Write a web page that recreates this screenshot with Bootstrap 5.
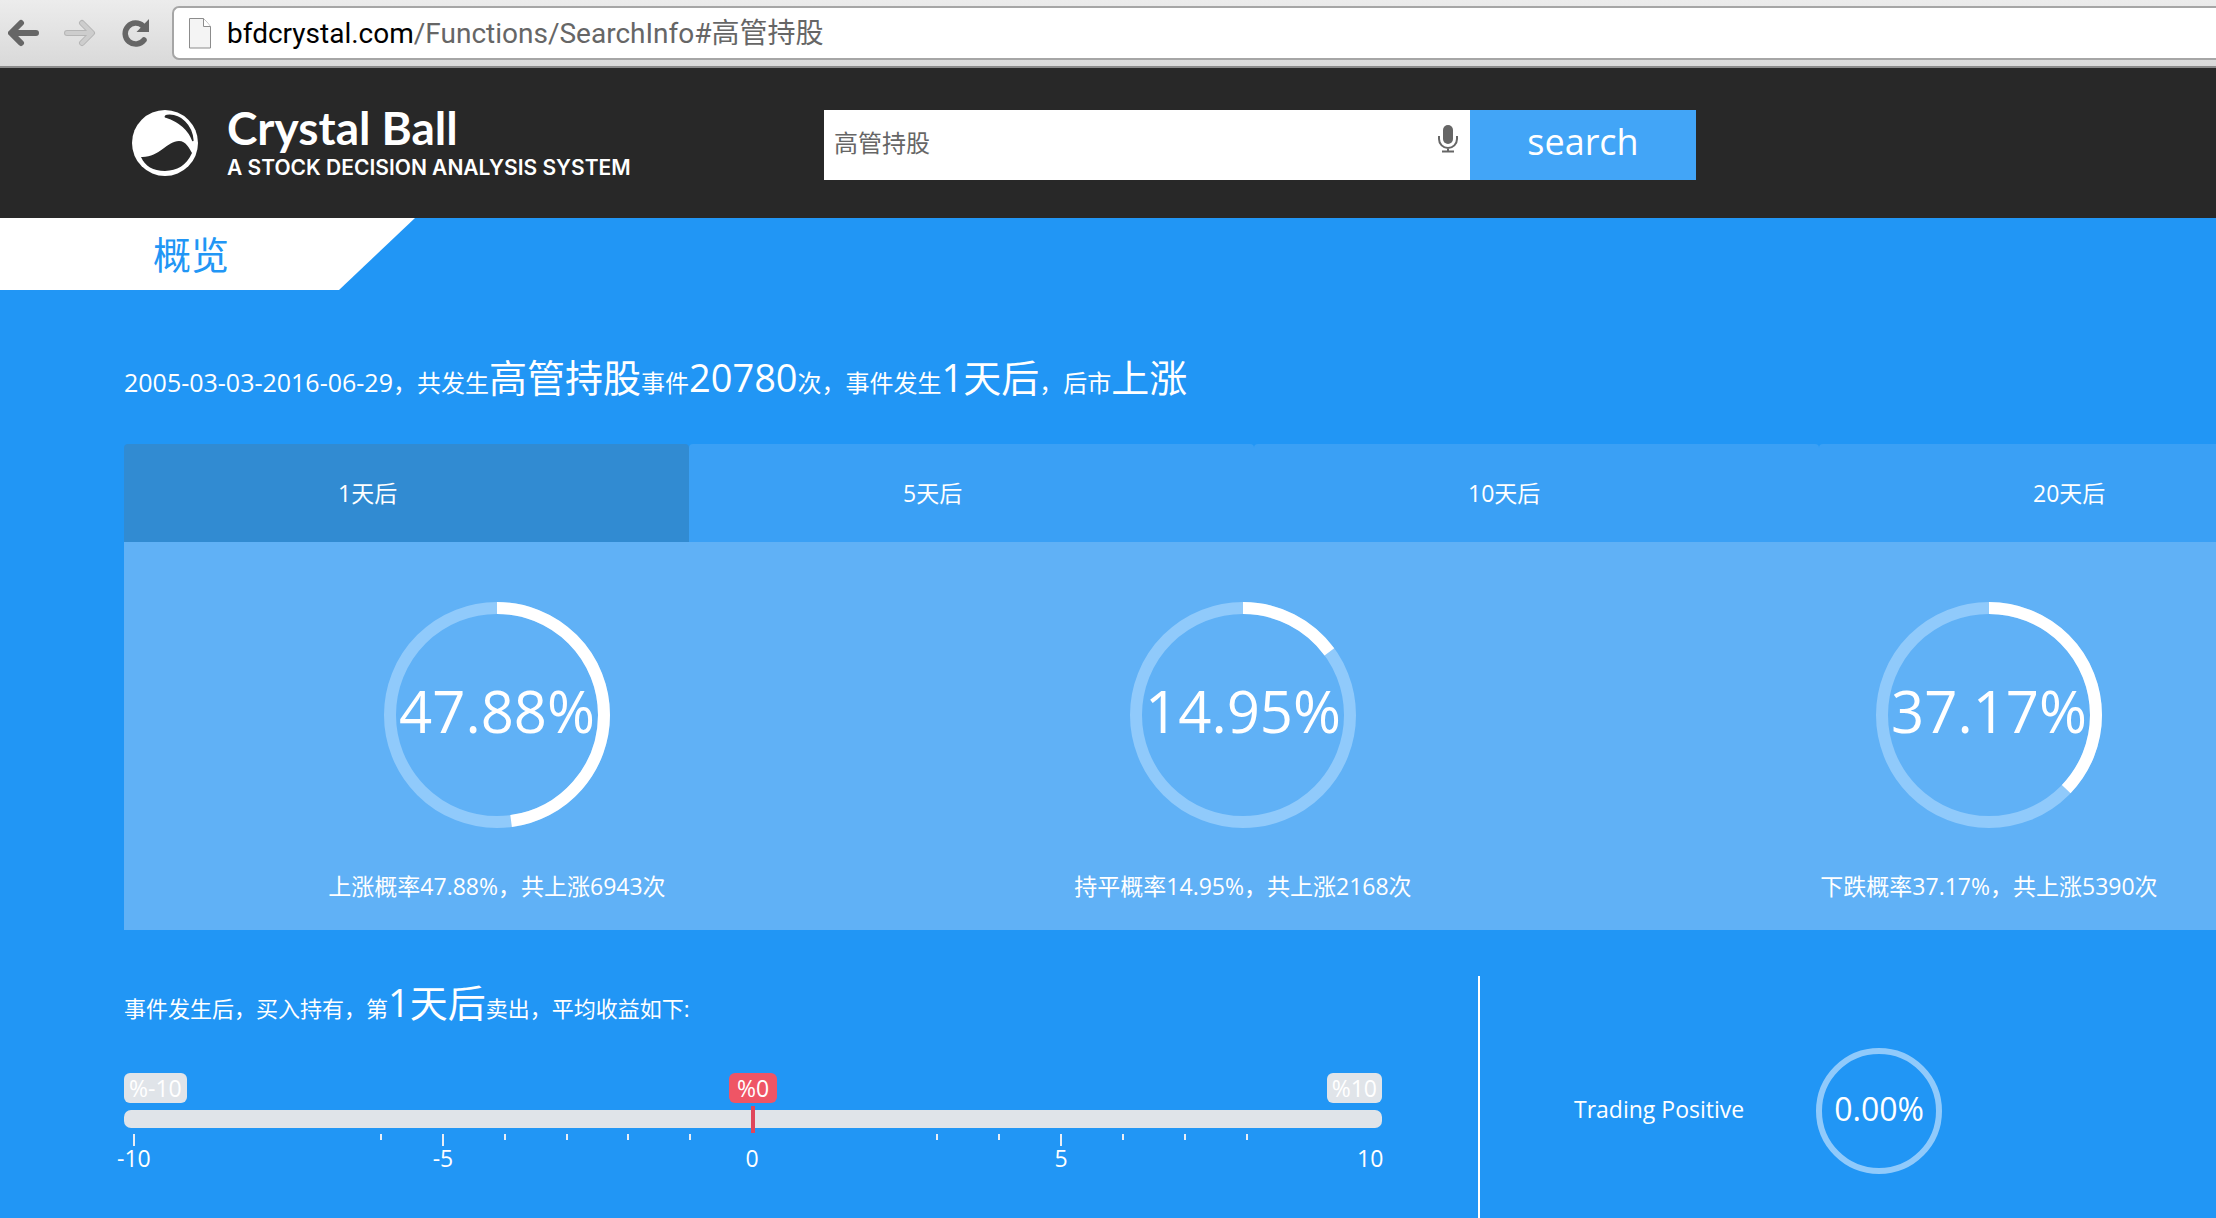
<!DOCTYPE html>
<html lang="zh-CN">
<head>
<meta charset="utf-8">
<meta name="viewport" content="width=device-width, initial-scale=1">
<title>Crystal Ball</title>
<link href="https://cdn.jsdelivr.net/npm/bootstrap@5.3.0/dist/css/bootstrap.min.css" rel="stylesheet">
<script src="https://cdn.jsdelivr.net/npm/bootstrap@5.3.0/dist/js/bootstrap.bundle.min.js" defer></script>
<style>
  body { font-family: "Open Sans", "Noto Sans CJK SC", sans-serif; font-size: 23px; line-height: 32px; background: #2196f5; color: #fff; }
  .chrome-bar { height: 68px; padding: 6px 0 6px 8px; background: linear-gradient(#ececec, #d9d9d9); border-bottom: 2px solid #8a8a8a; }
  .chrome-bar button { width: 32px; height: 28px; }
  .nav-keys { gap: 24px; width: 164px; }
  .omnibox { height: 54px; padding-left: 15px; background: #fff; border: 2px solid #a6a6a6; border-right: 0; border-radius: 7px 0 0 7px; font-family: Roboto, "Noto Sans CJK SC", sans-serif; font-size: 28px; line-height: 32px; }
  .omnibox label { color: #000; margin-left: 16px; padding-top: 2px; }
  .omnibox input { color: #666; padding-top: 2px; }
  .plain-input { border: 0; background: none; outline: 0; padding: 0; min-width: 0; }
  .site-head { height: 150px; background: #282828; }
  .brand-side { width: 824px; padding-left: 131px; gap: 28px; font-family: Lato, sans-serif; }
  .brand-name { font-size: 46px; line-height: 44px; font-weight: 700; margin-bottom: 6px; }
  .brand-sub { font-family: Inter, sans-serif; font-size: 21px; line-height: 24px; font-weight: 600; }
  .search-form { padding-top: 4px; }
  .search-box { width: 646px; height: 70px; background: #fff; padding: 0 12px 4px 10px; }
  .search-box input { color: #666; font-size: 24px; }
  .btn-search { width: 226px; height: 70px; background: #42a5f7; color: #fff; font-size: 36px; line-height: 36px; padding: 0 0 6px; border: 0; border-radius: 0; }
  .section-flag { width: 415px; height: 72px; padding-left: 153px; background: #fff; color: #2196f5; clip-path: polygon(0 0, 100% 0, 339px 100%, 0 100%); font-size: 38px; line-height: 72px; font-weight: 400; }
  .board { margin-left: 124px; min-height: 0; }
  .wide { width: calc(100% + 146px); }
  .summary { font-size: 24px; line-height: 52px; padding: 61px 0 35px; }
  .summary time { font-size: 25px; }
  .big { font-size: 38px; }
  .day-tab { flex: 0 0 565px; height: 98px; padding: 0 0 0 214px; border: 0; border-radius: 4px 4px 0 0; background: #3aa0f5; color: #fff; text-align: left; }
  .day-tab.active { background: #318bd2; }
  .rate-panel { background: #60b1f6; height: 388px; padding-top: 60px; }
  .ring-track { fill: none; stroke: #90cafb; }
  .ring-arc { fill: none; stroke: #fff; }
  .ring-big { font-size: 58px; padding-bottom: 8px; }
  .ring-small { font-size: 32px; padding-bottom: 4px; }
  .rate-note { margin-top: 35px; }
  .gain { flex: 0 0 1258px; padding-top: 46px; }
  .gain-text { font-size: 22px; line-height: 52px; }
  .bubbles { margin-top: 38px; }
  .bubble { display: inline-block; height: 30px; line-height: 30px; border-radius: 6px; background: #e0e4e9; padding: 0 5px; }
  .bubble-now { background: #ef5565; padding: 0 8px; }
  .gain-range { appearance: none; display: block; width: 100%; height: 18px; margin: 6px 0; border-radius: 7px; background: #e0e4e9; }
  .gain-range::-webkit-slider-thumb { appearance: none; width: 4px; height: 27px; background: #e0465a; border: 0; }
  .ruler { margin: 0 -19px 0 -21px; line-height: 24px; }
  .ruler div { flex: 1 1 0; min-width: 0; display: flex; flex-direction: column; align-items: center; }
  .ruler i { width: 2px; height: 6px; background: #e8eef5; margin-bottom: 6px; }
  .ruler i.long { height: 12px; margin-bottom: 0; }
  .ruler i.none { visibility: hidden; }
  .positive { margin: 46px 0 0 96px; border-left: 2px solid #fff; padding: 72px 0 0 94px; gap: 72px; }
  .positive-label { height: 122px; }
</style>
</head>
<body class="d-flex flex-column vh-100 overflow-hidden">
<div class="chrome-bar d-flex align-items-center flex-shrink-0">
  <div class="nav-keys d-flex align-items-center flex-shrink-0">
    <button class="btn p-0 border-0 d-flex" aria-label="Back"><svg width="32" height="28" viewBox="0 0 32 28"><path d="M28 14H5M13 4L3 14l10 10" fill="none" stroke="#666" stroke-width="6" stroke-linecap="round" stroke-linejoin="round"/></svg></button>
    <button class="btn p-0 border-0 d-flex" aria-label="Forward"><svg width="32" height="28" viewBox="0 0 32 28"><path d="M3 14H26M18 4L28 14l-10 10" fill="none" stroke="#b5b5b5" stroke-width="6" stroke-linecap="round" stroke-linejoin="round"/><path d="M3 14H26M18 4L28 14l-10 10" fill="none" stroke="#cdcdcd" stroke-width="4" stroke-linecap="round" stroke-linejoin="round"/></svg></button>
    <button class="btn p-0 border-0 d-flex" aria-label="Reload"><svg width="32" height="28" viewBox="0 0 32 28"><path d="M23 7A10.500 10.500 0 1 0 24 21" fill="none" stroke="#666" stroke-width="5.500" stroke-linecap="round"/><path d="M29 0v13H16.500z" fill="#666"/></svg></button>
  </div>
  <div class="omnibox d-flex align-items-center flex-grow-1">
    <svg width="22" height="31" viewBox="0 0 22 31"><path d="M.500.500h14l7 8v21.500H.500z" fill="#f4f4f4" stroke="#8c8c8c"/><path d="M14.500.500v8h7" fill="#fff" stroke="#8c8c8c"/></svg>
    <label for="address">bfdcrystal.com</label>
    <input id="address" class="plain-input flex-grow-1" type="text" value="/Functions/SearchInfo#高管持股">
  </div>
</div>

<header class="site-head d-flex align-items-center flex-shrink-0">
  <div class="brand-side d-flex align-items-center flex-shrink-0">
    <svg width="68" height="66" viewBox="0 0 68 66"><circle cx="34" cy="33" r="33" fill="#fff"/><path d="M10 47C28 48 36 31 48 31C55 31 58 38 61 43C55 56 46 60.500 34 61C22 61 14 56 10 47Z" fill="#282828"/><path d="M35 7C50 12 58 20 62 31C61 15 49 4 36 5.500C34 6 34 7 35 7Z" fill="#282828" stroke="#282828" stroke-width="1.500"/></svg>
    <div>
      <div class="brand-name">Crystal Ball</div>
      <div class="brand-sub text-nowrap">A STOCK DECISION ANALYSIS SYSTEM</div>
    </div>
  </div>
  <form class="search-form d-flex">
    <div class="search-box d-flex align-items-center">
      <input class="plain-input flex-grow-1" type="text" value="高管持股" aria-label="Search">
      <svg width="20" height="28" viewBox="0 0 20 28" class="mb-2"><rect x="5" y="0" width="10" height="19" rx="5" fill="#666"/><path d="M1 11v3a9 9 0 0 0 18 0v-3M10 23v3M4 26.500h12" fill="none" stroke="#666" stroke-width="2"/></svg>
    </div>
    <button type="button" class="btn btn-search">search</button>
  </form>
</header>

<h1 class="section-flag m-0 flex-shrink-0">概览</h1>

<main class="board d-flex flex-column flex-grow-1">
  <div class="wide flex-shrink-0">
    <p class="summary m-0 text-nowrap"><time>2005-03-03-2016-06-29</time>，共发生<span class="big">高管持股</span>事件<span class="big">20780</span>次，事件发生<span class="big">1天后</span>，后市<span class="big">上涨</span></p>
    <div class="d-flex overflow-hidden">
      <button class="day-tab active">1天后</button>
      <button class="day-tab">5天后</button>
      <button class="day-tab">10天后</button>
      <button class="day-tab">20天后</button>
    </div>
    <div class="rate-panel row g-0 text-center">
      <div class="col-4">
        <div class="position-relative d-inline-flex">
          <svg width="226" height="226" viewBox="0 0 226 226"><circle class="ring-track" cx="113" cy="113" r="107" stroke-width="12"/><circle class="ring-arc" cx="113" cy="113" r="107" stroke-width="12" pathLength="100" stroke-dasharray="47.88 100" transform="rotate(-90 113 113)"/></svg>
          <span class="ring-big position-absolute top-0 start-0 w-100 h-100 d-flex align-items-center justify-content-center">47.88%</span>
        </div>
        <div class="rate-note">上涨概率47.88%，共上涨6943次</div>
      </div>
      <div class="col-4">
        <div class="position-relative d-inline-flex">
          <svg width="226" height="226" viewBox="0 0 226 226"><circle class="ring-track" cx="113" cy="113" r="107" stroke-width="12"/><circle class="ring-arc" cx="113" cy="113" r="107" stroke-width="12" pathLength="100" stroke-dasharray="14.95 100" transform="rotate(-90 113 113)"/></svg>
          <span class="ring-big position-absolute top-0 start-0 w-100 h-100 d-flex align-items-center justify-content-center">14.95%</span>
        </div>
        <div class="rate-note">持平概率14.95%，共上涨2168次</div>
      </div>
      <div class="col-4">
        <div class="position-relative d-inline-flex">
          <svg width="226" height="226" viewBox="0 0 226 226"><circle class="ring-track" cx="113" cy="113" r="107" stroke-width="12"/><circle class="ring-arc" cx="113" cy="113" r="107" stroke-width="12" pathLength="100" stroke-dasharray="37.17 100" transform="rotate(-90 113 113)"/></svg>
          <span class="ring-big position-absolute top-0 start-0 w-100 h-100 d-flex align-items-center justify-content-center">37.17%</span>
        </div>
        <div class="rate-note">下跌概率37.17%，共上涨5390次</div>
      </div>
    </div>
  </div>

  <div class="d-flex flex-grow-1">
    <section class="gain">
      <label for="gain" class="gain-text d-block text-nowrap">事件发生后，买入持有，第<span class="big">1天后</span>卖出，平均收益如下:</label>
      <div class="bubbles row g-0">
        <div class="col"><span class="bubble">%-10</span></div>
        <div class="col text-center"><span class="bubble bubble-now">%0</span></div>
        <div class="col text-end"><span class="bubble">%10</span></div>
      </div>
      <input id="gain" class="gain-range" type="range" min="-10" max="10" value="0">
      <div class="ruler d-flex">
        <div><i class="long"></i>-10</div><div></div><div></div><div></div>
        <div><i></i></div><div><i class="long"></i>-5</div><div><i></i></div><div><i></i></div><div><i></i></div><div><i></i></div>
        <div><i class="long none"></i>0</div><div></div><div></div>
        <div><i></i></div><div><i></i></div><div><i class="long"></i>5</div><div><i></i></div><div><i></i></div><div><i></i></div>
        <div></div><div><i class="long none"></i>10</div>
      </div>
    </section>
    <section class="positive d-flex align-items-start">
      <div class="positive-label d-flex align-items-center flex-shrink-0">Trading Positive</div>
      <div class="position-relative d-inline-flex">
        <svg width="126" height="126" viewBox="0 0 126 126"><circle class="ring-track" cx="63" cy="63" r="60" stroke-width="6"/></svg>
        <span class="ring-small position-absolute top-0 start-0 w-100 h-100 d-flex align-items-center justify-content-center">0.00%</span>
      </div>
    </section>
  </div>
</main>
</body>
</html>
